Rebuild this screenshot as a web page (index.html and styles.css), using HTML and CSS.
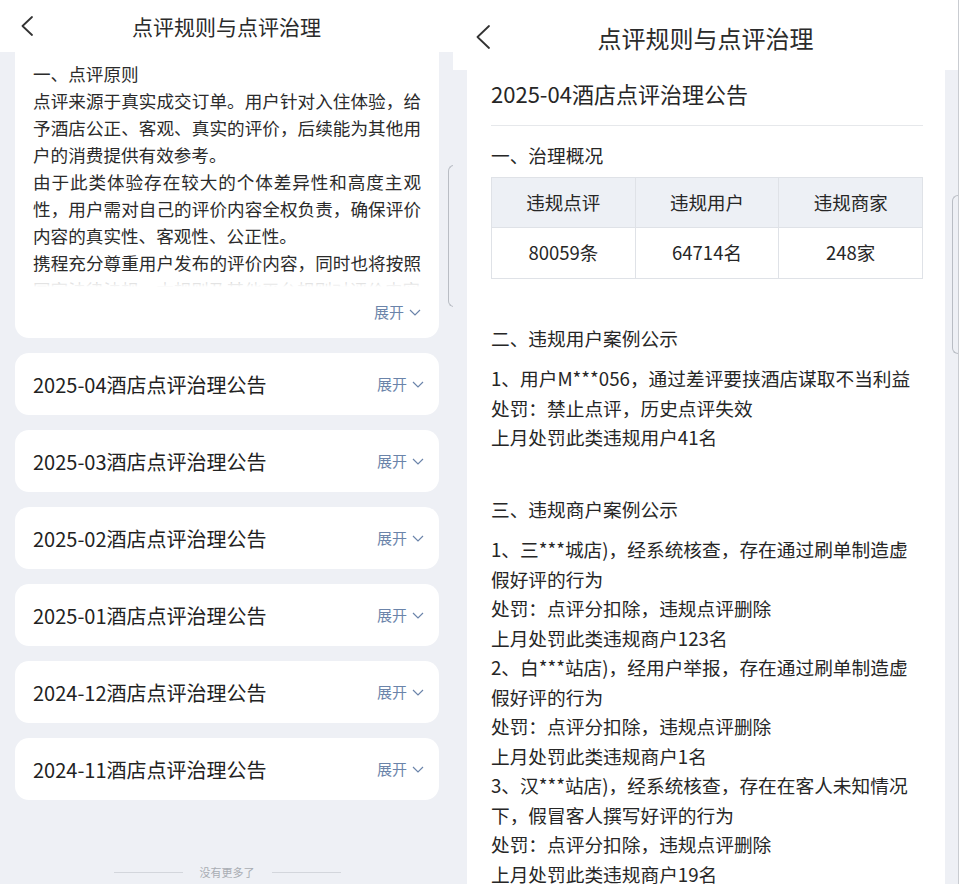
FILE: index.html
```html
<!DOCTYPE html>
<html lang="zh-CN">
<head>
    <meta charset="UTF-8">
    <meta name="viewport" content="width=device-width, initial-scale=1.0">
    <title>点评规则与点评治理</title>
    <link rel="stylesheet" href="styles.css">
</head>
<body>
    <div class="screen screen-list">
        <header class="topbar">
            <span class="back">
                <svg width="14" height="20" viewBox="0 0 14 20"><path d="M12 1 L2.5 10 L12 19" fill="none" stroke="#333" stroke-width="1.8" stroke-linecap="round" stroke-linejoin="round"/></svg>
            </span>
            <h1>点评规则与点评治理</h1>
            <span></span>
        </header>

        <main class="list-body">
            <section class="intro-card">
                <div class="intro-text">
                    <p>一、点评原则</p>
                    <p>点评来源于真实成交订单。用户针对入住体验，给予酒店公正、客观、真实的评价，后续能为其他用户的消费提供有效参考。</p>
                    <p>由于此类体验存在较大的个体差异性和高度主观性，用户需对自己的评价内容全权负责，确保评价内容的真实性、客观性、公正性。</p>
                    <p>携程充分尊重用户发布的评价内容，同时也将按照国家法律法规、本规则及其他平台规则对评价内容</p>
                </div>
                <div class="toggle">展开
                    <svg width="12" height="7" viewBox="0 0 12 7"><path d="M1 1 L6 6 L11 1" fill="none" stroke="#6b84aa" stroke-width="1.2"/></svg>
                </div>
            </section>

            <ul class="notice-list">
                <li class="notice"><span>2025-04酒店点评治理公告</span><span class="toggle">展开 <svg width="12" height="7" viewBox="0 0 12 7"><path d="M1 1 L6 6 L11 1" fill="none" stroke="#6b84aa" stroke-width="1.2"/></svg></span></li>
                <li class="notice"><span>2025-03酒店点评治理公告</span><span class="toggle">展开 <svg width="12" height="7" viewBox="0 0 12 7"><path d="M1 1 L6 6 L11 1" fill="none" stroke="#6b84aa" stroke-width="1.2"/></svg></span></li>
                <li class="notice"><span>2025-02酒店点评治理公告</span><span class="toggle">展开 <svg width="12" height="7" viewBox="0 0 12 7"><path d="M1 1 L6 6 L11 1" fill="none" stroke="#6b84aa" stroke-width="1.2"/></svg></span></li>
                <li class="notice"><span>2025-01酒店点评治理公告</span><span class="toggle">展开 <svg width="12" height="7" viewBox="0 0 12 7"><path d="M1 1 L6 6 L11 1" fill="none" stroke="#6b84aa" stroke-width="1.2"/></svg></span></li>
                <li class="notice"><span>2024-12酒店点评治理公告</span><span class="toggle">展开 <svg width="12" height="7" viewBox="0 0 12 7"><path d="M1 1 L6 6 L11 1" fill="none" stroke="#6b84aa" stroke-width="1.2"/></svg></span></li>
                <li class="notice"><span>2024-11酒店点评治理公告</span><span class="toggle">展开 <svg width="12" height="7" viewBox="0 0 12 7"><path d="M1 1 L6 6 L11 1" fill="none" stroke="#6b84aa" stroke-width="1.2"/></svg></span></li>
            </ul>

            <div class="no-more"><i></i><span>没有更多了</span><i></i></div>
        </main>
        <div class="scroll-edge edge-left"></div>
    </div>

    <div class="screen screen-detail">
        <header class="topbar topbar-tall">
            <span class="back">
                <svg width="16" height="24" viewBox="0 0 16 24"><path d="M14 1 L2.5 12 L14 23" fill="none" stroke="#333" stroke-width="1.8" stroke-linecap="round" stroke-linejoin="round"/></svg>
            </span>
            <h1>点评规则与点评治理</h1>
            <span></span>
        </header>

        <main class="detail-body">
            <h2>2025-04酒店点评治理公告</h2>
            <hr>
            <h3>一、治理概况</h3>
            <table class="stats">
                <tr><th>违规点评</th><th>违规用户</th><th>违规商家</th></tr>
                <tr><td>80059条</td><td>64714名</td><td>248家</td></tr>
            </table>

            <h3 class="section-gap">二、违规用户案例公示</h3>
            <div class="case">
                <p>1、用户M***056，通过差评要挟酒店谋取不当利益</p>
                <p>处罚：禁止点评，历史点评失效</p>
                <p>上月处罚此类违规用户41名</p>
            </div>

            <h3 class="section-gap-lg">三、违规商户案例公示</h3>
            <div class="case">
                <p>1、三***城店)，经系统核查，存在通过刷单制造虚假好评的行为</p>
                <p>处罚：点评分扣除，违规点评删除</p>
                <p>上月处罚此类违规商户123名</p>
                <p>2、白***站店)，经用户举报，存在通过刷单制造虚假好评的行为</p>
                <p>处罚：点评分扣除，违规点评删除</p>
                <p>上月处罚此类违规商户1名</p>
                <p>3、汉***站店)，经系统核查，存在在客人未知情况下，假冒客人撰写好评的行为</p>
                <p>处罚：点评分扣除，违规点评删除</p>
                <p>上月处罚此类违规商户19名</p>
            </div>
        </main>
        <div class="scroll-edge edge-right"></div>
    </div>
</body>
</html>
```

FILE: styles.css
```css
body {
    margin: 0;
    display: flex;
    height: 884px;
    overflow: hidden;
    background-color: #ffffff;
    font-family: "Noto Sans CJK SC", "Noto Sans", sans-serif;
    color: #333333;
}

.screen {
    position: relative;
    display: flex;
    flex-direction: column;
    background-color: #eef0f5;
    overflow: hidden;
}

.screen-list {
    width: 453px;
}

.screen-detail {
    width: 505px;
    border-right: 1px solid #c9ccd1;
}

/* barra superior */
.topbar {
    display: grid;
    grid-template-columns: 60px 1fr 60px;
    align-items: center;
    height: 52px;
    background-color: #ffffff;
    flex-shrink: 0;
}

.topbar h1 {
    margin: 0;
    text-align: center;
    font-size: 21px;
    font-weight: 400;
    color: #2b2b2b;
}

.back {
    display: flex;
    padding-left: 20px;
}

.topbar-tall {
    height: 70px;
    padding-top: 4px;
    box-sizing: border-box;
}

.topbar-tall h1 {
    font-size: 24px;
}

.topbar-tall .back {
    padding-left: 22px;
}

/* lista de la izquierda */
.list-body {
    padding: 0 14px 0 15px;
}

.intro-card {
    background-color: #ffffff;
    border-radius: 0 0 14px 14px;
    padding: 8px 18px 16px 18px;
}

.intro-text {
    position: relative;
    height: 227px;
    overflow: hidden;
    font-size: 17.6px;
    line-height: 27px;
    text-align: justify;
    color: #2b2b2b;
}

.intro-text p {
    margin: 0;
}

.intro-text::after {
    content: "";
    position: absolute;
    left: 0;
    right: 0;
    bottom: 0;
    height: 12px;
    background: linear-gradient(rgba(255, 255, 255, 0.55), #ffffff);
}

.toggle {
    display: flex;
    align-items: center;
    justify-content: flex-end;
    gap: 5px;
    font-size: 15px;
    line-height: 20px;
    color: #6b84aa;
}

.intro-card .toggle {
    margin-top: 15px;
}

.notice-list {
    list-style: none;
    margin: 15px 0 0;
    padding: 0;
    display: flex;
    flex-direction: column;
    gap: 15px;
}

.notice {
    display: flex;
    justify-content: space-between;
    align-items: center;
    height: 62px;
    padding: 0 15px 0 18px;
    background-color: #ffffff;
    border-radius: 14px;
    font-size: 20px;
    color: #222222;
}

.no-more {
    display: flex;
    justify-content: center;
    align-items: center;
    gap: 17px;
    margin-top: 64px;
    font-size: 11px;
    line-height: 16px;
    color: #a9adb3;
}

.no-more i {
    width: 69px;
    height: 1px;
    background-color: #d3d6dc;
}

/* detalle de la derecha */
.detail-body {
    flex-grow: 1;
    margin: 0 13px 0 14px;
    padding: 8px 22px 0 24px;
    background-color: #ffffff;
    font-size: 18.7px;
    line-height: 29.5px;
    color: #262626;
}

.detail-body h2 {
    margin: 0;
    font-size: 22px;
    line-height: 30px;
    font-weight: 400;
}

.detail-body hr {
    margin: 17px 0 0;
    border: none;
    border-top: 1px solid #e6e8eb;
}

.detail-body h3 {
    margin: 13.5px 0 0;
    font-size: 18.7px;
    font-weight: 400;
}

.detail-body .section-gap {
    margin-top: 44px;
}

.detail-body .section-gap-lg {
    margin-top: 42.5px;
}

.stats {
    width: 100%;
    margin-top: 8px;
    border-collapse: collapse;
    table-layout: fixed;
    font-size: 18.5px;
}

.stats th,
.stats td {
    border: 1px solid #dfe2e7;
    text-align: center;
    font-weight: 400;
    padding: 0;
}

.stats th {
    height: 49px;
    background-color: #edf0f5;
}

.stats td {
    height: 50px;
}

.case {
    margin-top: 10.5px;
}

.case p {
    margin: 0;
}

/* bordes de desplazamiento */
.scroll-edge {
    position: absolute;
    width: 6px;
    border: 1.5px solid #b9bdc4;
    border-right: none;
    border-radius: 6px 0 0 6px;
}

.edge-left {
    left: 448px;
    top: 165px;
    height: 140px;
}

.edge-right {
    left: 499px;
    top: 195px;
    height: 157px;
}
```
